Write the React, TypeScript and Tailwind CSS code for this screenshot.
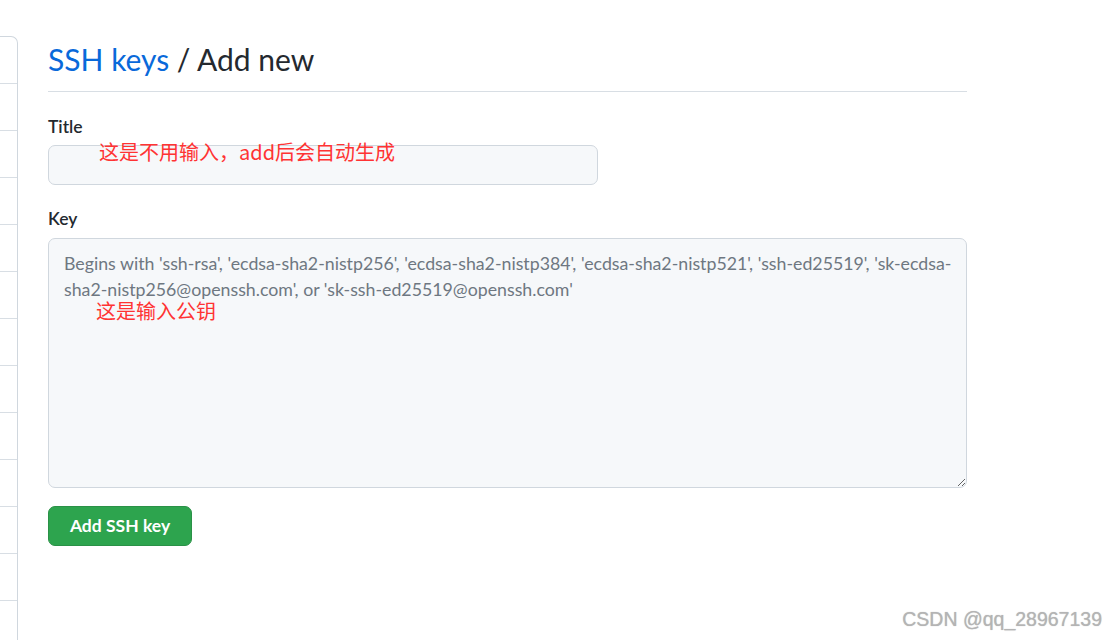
import { useState } from "react";

const sidebarRows = Array.from({ length: 13 });

const placeholder =
  "Begins with 'ssh-rsa', 'ecdsa-sha2-nistp256', 'ecdsa-sha2-nistp384', 'ecdsa-sha2-nistp521', 'ssh-ed25519', 'sk-ecdsa-\nsha2-nistp256@openssh.com', or 'sk-ssh-ed25519@openssh.com'";

function SideMenu() {
  return (
    <nav className="w-[18px] shrink-0 mt-[36px] h-[620px] border-t border-r border-[#d0d7de] rounded-tr-[7px] overflow-hidden">
      {sidebarRows.map((_, i) => (
        <div key={i} className="h-[47px] border-b border-[#d8dee4]" />
      ))}
    </nav>
  );
}

function App() {
  const [title, setTitle] = useState("");
  const [key, setKey] = useState("");

  return (
    <div className="relative flex w-[1118px] h-[640px] overflow-hidden bg-white font-['Lato','Noto_Sans_CJK_SC',sans-serif] text-[#24292f]">
      <SideMenu />
      <main className="ml-[30px] w-[919px] pt-[41px]">
        <div className="border-b border-[#d8dee4] pb-[13px] mb-[22px]">
          <h2 className="text-[30px] leading-[37px] font-normal">
            <a href="#" className="text-[#0969da]">
              SSH keys
            </a>{" "}
            / Add new
          </h2>
        </div>

        <form onSubmit={(e) => e.preventDefault()}>
          <label className="block text-[17.5px] leading-[26px] font-semibold mb-[5px]">
            Title
          </label>
          <div className="relative w-[550px]">
            <input
              value={title}
              onChange={(e) => setTitle(e.target.value)}
              className="block w-full h-[40px] px-[15px] rounded-[7px] border border-[#d0d7de] bg-[#f6f8fa] text-[17.5px] outline-none"
            />
            <span className="absolute left-[51px] -top-[6px] text-[20px] leading-[26px] text-[#ff3333] font-['Noto_Sans_CJK_SC',sans-serif] pointer-events-none">
              这是不用输入，add后会自动生成
            </span>
          </div>

          <label className="block mt-[21px] text-[17.5px] leading-[26px] font-semibold mb-[6px]">
            Key
          </label>
          <div className="relative">
            <textarea
              value={key}
              onChange={(e) => setKey(e.target.value)}
              placeholder={placeholder}
              wrap="off"
              className="block w-full h-[250px] pt-[11px] pb-[6px] px-[15px] rounded-[7px] border border-[#d0d7de] bg-[#f6f8fa] text-[17.75px] leading-[26px] placeholder:text-[#6e7781] outline-none resize-y overflow-hidden"
            />
            <span className="absolute left-[48px] top-[60px] text-[20px] leading-[26px] text-[#ff3333] font-['Noto_Sans_CJK_SC',sans-serif] pointer-events-none">
              这是输入公钥
            </span>
          </div>

          <button
            type="submit"
            className="mt-[18px] h-[40px] w-[144px] rounded-[7px] bg-[#2da44e] border border-[#2a9147] text-white text-[17.5px] font-bold"
          >
            Add SSH key
          </button>
        </form>
      </main>

      <div className="absolute right-[16px] bottom-[9px] text-[19.5px] leading-[24px] text-[#b4b4b4] font-['Liberation_Sans',sans-serif] [text-shadow:0_0_1px_#bbb]">
        CSDN @qq_28967139
      </div>
    </div>
  );
}

export default App;
